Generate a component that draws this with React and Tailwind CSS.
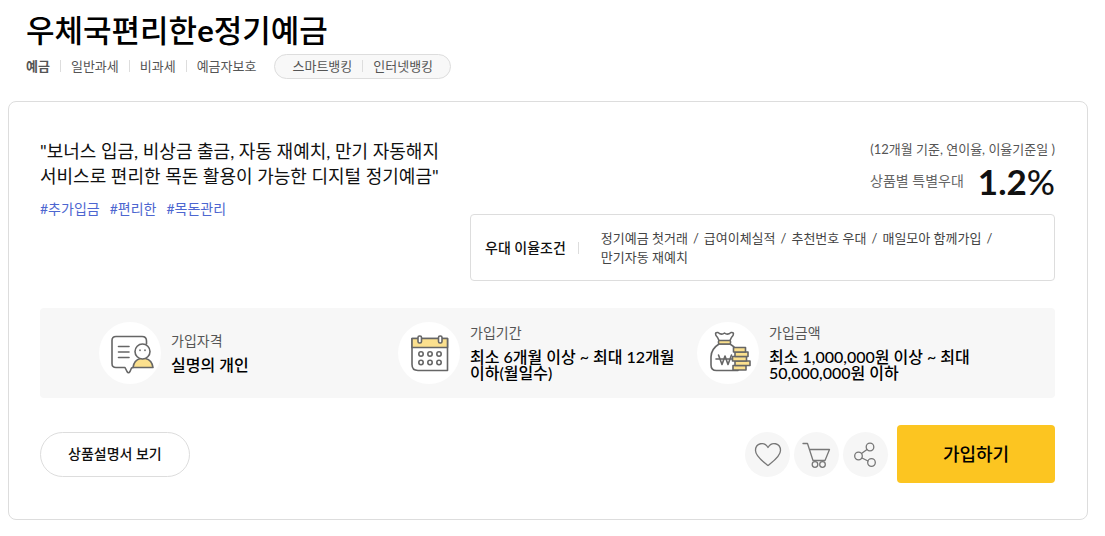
import React from 'react';

const font = "font-['Lato','Noto_Sans_CJK_KR',sans-serif]";

const conditions = ['정기예금 첫거래', '급여이체실적', '추천번호 우대', '매일모아 함께가입', '만기자동 재예치'];

function Bar({ className = '' }) {
  return <span aria-hidden="true" className={`h-3 w-px shrink-0 bg-[#dddddd] ${className}`} />;
}

function MemberIcon() {
  return (
    <svg aria-hidden="true" viewBox="0 0 62 62" className="size-full" fill="none" stroke="#666" strokeWidth="1.6" strokeLinejoin="round" strokeLinecap="round">
      <path d="M34 45.500L32.500 46L31 49.500Q29.500 52 28 49.500L26 45.500H17Q13 45.500 13 41.500V18.500Q13 14.500 17 14.500H43Q47.500 14.500 47.500 19V22" />
      <path d="M34 45.500Q35 38 41.500 36.500H46.500Q53 38 54 45.500Z" fill="#fbe08e" />
      <circle cx="43.500" cy="29.500" r="7.500" fill="#fff" />
      <path d="M41 28V28.500M46 28V28.500M19.500 24.500H30M19.500 30H30M19.500 35.500H30" />
    </svg>
  );
}

function CalendarIcon() {
  return (
    <svg aria-hidden="true" viewBox="0 0 62 62" className="size-full" fill="none" stroke="#666" strokeWidth="1.6" strokeLinejoin="round">
      <path d="M14 16.500H49.500V48.500H20Q14 48.500 14 42.500Z" fill="#fff" />
      <path d="M14 16.500H49.500V25.500H14Z" fill="#fbe08e" />
      <rect x="20" y="14" width="3.500" height="7" rx="1.500" fill="#fff" />
      <rect x="40.500" y="14" width="3.500" height="7" rx="1.500" fill="#fff" />
      {[23, 32, 41].map((x) => (
        <g key={x}>
          <circle cx={x} cy="32" r="2.200" />
          <circle cx={x} cy="40.500" r="2.200" />
        </g>
      ))}
    </svg>
  );
}

function MoneyIcon() {
  return (
    <svg aria-hidden="true" viewBox="0 0 62 62" className="size-full" fill="none" stroke="#666" strokeWidth="1.6" strokeLinejoin="round" strokeLinecap="round">
      <path d="M22 18.500Q21 15.500 19 13.500Q17.500 10 21 10.500Q24.500 13.500 27.500 11Q30.500 13.500 34 10.500Q37.500 10 36 13.500Q34 15.500 33 18.500" />
      <path d="M22 22Q14 27 14 35V43Q14 48.500 19.500 48.500H41V34Q40 26 33 22Z" fill="#fff" />
      <rect x="21.500" y="18.500" width="12" height="3.500" rx="1" fill="#fbe08e" />
      <path d="M19 37H36M21.500 33L25 42.500L28 34L31 42.500L34.500 33" />
      <rect x="36" y="43.500" width="13" height="4.500" fill="#fbe08e" />
      <rect x="38" y="39" width="15" height="4.500" fill="#fbe08e" />
      <rect x="35.500" y="34.500" width="14" height="4.500" fill="#fbe08e" />
      <rect x="38" y="30" width="13" height="4.500" fill="#fbe08e" />
      <rect x="36.500" y="25.500" width="12" height="4.500" fill="#fbe08e" />
    </svg>
  );
}

function Fact({ icon, label, children }) {
  return (
    <div className="flex items-center gap-2.5">
      <div className="size-[62px] shrink-0 rounded-full bg-white">{icon}</div>
      <dl className="pr-2 pb-0.5">
        <dt className="text-sm leading-5 text-[#555555]">{label}</dt>
        <dd className="mt-1.5 text-base leading-4 font-medium text-black">{children}</dd>
      </dl>
    </div>
  );
}

function RoundButton({ label, children }) {
  return (
    <button type="button" aria-label={label} className="size-[45px] rounded-full bg-[#f6f6f6]">
      <svg aria-hidden="true" viewBox="0 0 45 45" className="size-full" fill="none" stroke="#777" strokeWidth="1.3" strokeLinejoin="round" strokeLinecap="round">
        {children}
      </svg>
    </button>
  );
}

export default function App() {
  return (
    <main className={`${font} bg-white pt-[7px] pr-[17px] pb-4 pl-2 text-[#111111]`} lang="ko">
      <header className="pl-[18px]">
        <h1 className="text-[31px] leading-[46px] font-medium text-black">
          우체국편리한<b className="font-bold">e</b>정기예금
        </h1>
        <div className="mt-px flex items-center text-[13px] leading-5 text-[#555555]">
          <div className="flex items-center gap-2.5 pb-0.5">
            <strong className="font-bold">예금</strong>
            <Bar />
            <span>일반과세</span>
            <Bar />
            <span>비과세</span>
            <Bar />
            <span>예금자보호</span>
          </div>
          <div className="ml-[18px] flex h-[25px] items-center gap-2.5 rounded-full border border-[#dddddd] bg-[#f8f8f8] px-[17px] pb-0.5">
            <span>스마트뱅킹</span>
            <Bar />
            <span>인터넷뱅킹</span>
          </div>
        </div>
      </header>

      <section className="mt-[22px] rounded-lg border border-[#dddddd] pt-9 pr-8 pb-9 pl-[31px]">
        <div className="flex">
          <div className="w-[430px] shrink-0">
            <p className="mt-px text-lg leading-[25px] text-[#111111]">
              "보너스 입금, 비상금 출금, 자동 재예치, 만기 자동해지
              <br />
              서비스로 편리한 목돈 활용이 가능한 디지털 정기예금"
            </p>
            <ul className="mt-2.5 flex gap-2.5 text-sm leading-5 text-[#4d66d0]">
              <li>#추가입금</li>
              <li>#편리한</li>
              <li>#목돈관리</li>
            </ul>
          </div>
          <div className="min-w-0 flex-1">
            <p className="text-right text-[13px] leading-[22px] text-[#555555]">(12개월 기준, 연이율, 이율기준일 )</p>
            <div className="flex items-center justify-end gap-3.5">
              <span className="text-sm text-[#666666]">상품별 특별우대</span>
              <p className="text-[35px] leading-[42px] font-bold">
                1.2<span className="font-medium">%</span>
              </p>
            </div>
            <div className="mt-3 flex h-[67px] items-center rounded border border-[#dddddd] pr-12 pl-3.5">
              <strong className="shrink-0 text-sm font-medium text-[#111111]">우대 이율조건</strong>
              <Bar className="ml-3" />
              <ul className="ml-[22px] flex flex-wrap gap-x-[5px] text-[13px] leading-[19px] text-[#444444]">
                {conditions.map((text, i) => (
                  <li key={text} className="flex gap-[5px]">
                    {text}
                    {i < conditions.length - 1 && <span>/</span>}
                  </li>
                ))}
              </ul>
            </div>
          </div>
        </div>

        <div className="mt-[27px] grid min-h-[90px] grid-cols-3 rounded bg-[#f7f7f7] px-[59px]">
          <Fact icon={<MemberIcon />} label="가입자격">실명의 개인</Fact>
          <Fact icon={<CalendarIcon />} label="가입기간">
            최소 6개월 이상 ~ 최대 12개월
            <br />
            이하(월일수)
          </Fact>
          <Fact icon={<MoneyIcon />} label="가입금액">
            최소 1,000,000원 이상 ~ 최대
            <br />
            50,000,000원 이하
          </Fact>
        </div>

        <div className="mt-[27px] flex items-center justify-between">
          <button type="button" className="h-[45px] rounded-full border border-[#dddddd] px-[27px] text-sm font-medium">
            상품설명서 보기
          </button>
          <div className="flex items-center gap-1">
            <RoundButton label="찜하기">
              <path d="M23 33.500C18 29.500 10.500 24.500 10.500 18.500C10.500 11 19.500 9 23 15.500C26.500 9 35.500 11 35.500 18.500C35.500 24.500 28 29.500 23 33.500Z" />
            </RoundButton>
            <RoundButton label="장바구니">
              <path d="M9 11.500H13.500L19 28.500H31L35.500 17.500H15.500" />
              <circle cx="21" cy="32.500" r="2.800" />
              <circle cx="28.500" cy="32.500" r="2.800" />
            </RoundButton>
            <RoundButton label="공유하기">
              <circle cx="27" cy="15" r="3.800" />
              <circle cx="15.500" cy="24" r="3.800" />
              <circle cx="28.500" cy="30.500" r="3.800" />
              <path d="M18.500 21.500L24 17.500M19 26L25 29" />
            </RoundButton>
            <button type="button" className="ml-[5px] h-[58px] w-[158px] rounded bg-[#fcc521] text-lg font-medium text-black">
              가입하기
            </button>
          </div>
        </div>
      </section>
    </main>
  );
}
